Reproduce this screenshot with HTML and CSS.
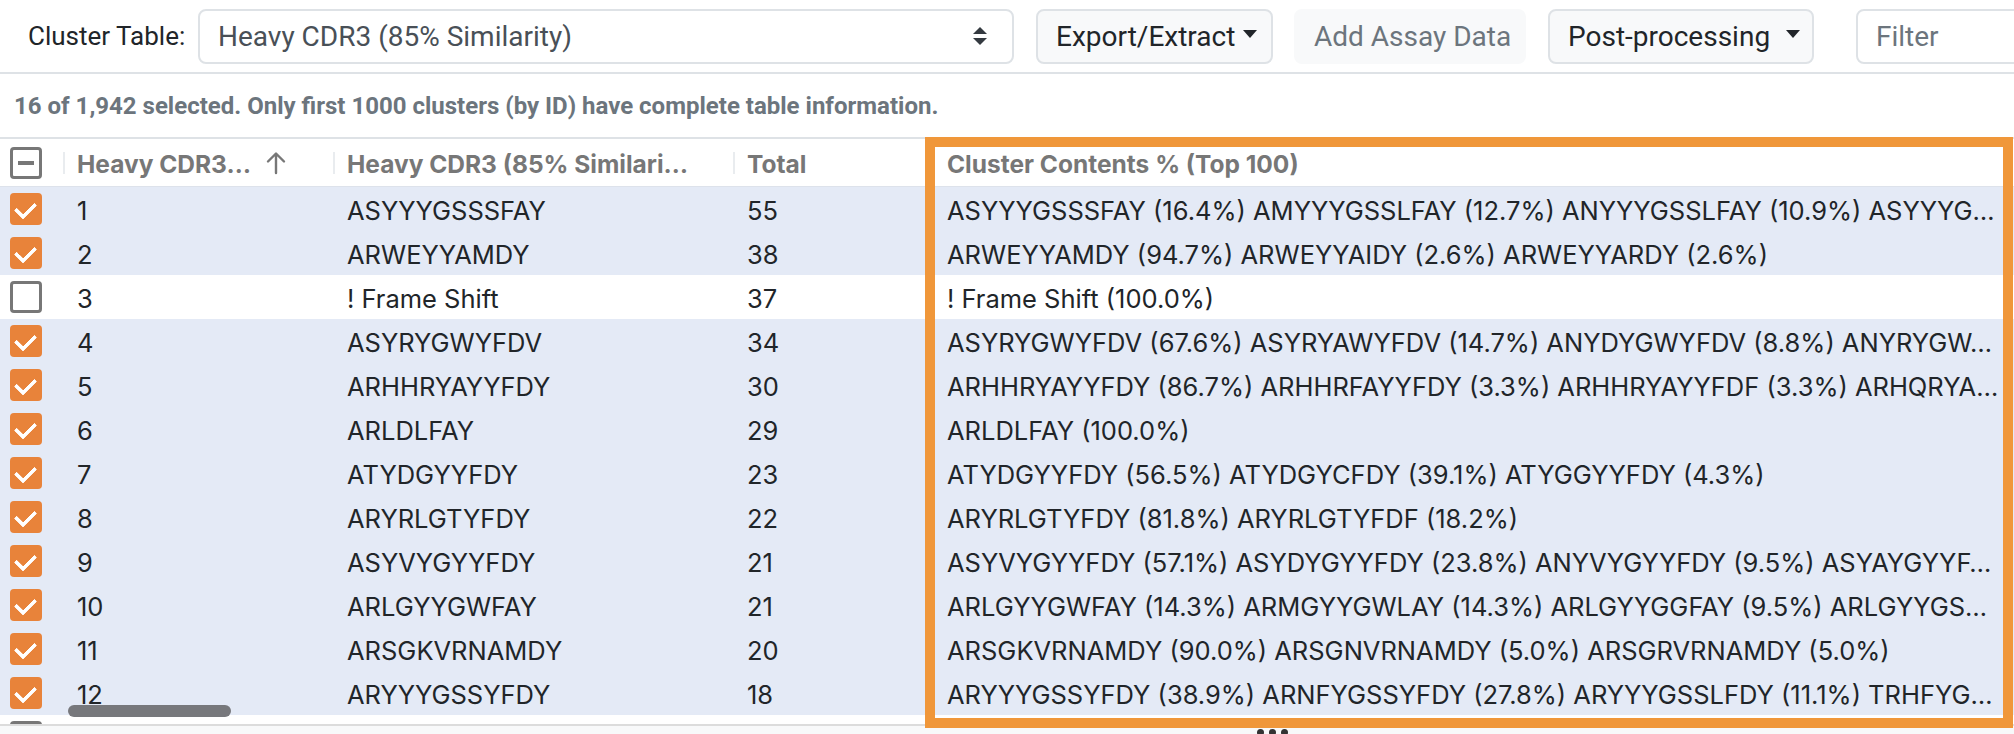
FILE: index.html
```html
<!DOCTYPE html>
<html lang="en">
<head>
<meta charset="utf-8">
<title>Cluster Table</title>
<link rel="stylesheet" href="styles.css">
</head>
<body>
<div class="app">
  <header class="toolbar">
    <label class="tb-label">Cluster Table:</label>
    <div class="select">
      <span class="select-value">Heavy CDR3 (85% Similarity)</span>
      <svg class="select-arrows" viewBox="0 0 16 20" width="16" height="20"><path d="M8 1L15 8H1z" fill="#343a40"/><path d="M8 19L1 12H15z" fill="#343a40"/></svg>
    </div>
    <button class="btn btn-export">Export/Extract<span class="caret"></span></button>
    <button class="btn btn-disabled">Add Assay Data</button>
    <button class="btn btn-post">Post-processing<span class="caret"></span></button>
    <div class="filter">Filter</div>
  </header>

  <div class="info">16 of 1,942 selected. Only first 1000 clusters (by ID) have complete table information.</div>

  <div class="grid">
    <div class="row head">
      <div class="cell cb-cell"><span class="cb cb-indet"></span></div>
      <div class="cell hcell"><span class="divider"></span><span class="htext">Heavy CDR3…</span><svg class="sort" viewBox="0 0 22 24" width="22" height="24"><path d="M11 22V3M3 10.5L11 2.5l8 8" fill="none" stroke="#777" stroke-width="2.4" stroke-linecap="round" stroke-linejoin="round"/></svg></div>
      <div class="cell hcell"><span class="divider"></span><span class="htext">Heavy CDR3 (85% Similari…</span></div>
      <div class="cell hcell"><span class="divider"></span><span class="htext">Total</span></div>
      <div class="cell hcell"><span class="divider"></span><span class="htext">Cluster Contents % (Top 100)</span></div>
    </div>
    <div class="body">
      <div class="row sel"><div class="cell cb-cell"><span class="cb cb-on"></span></div><div class="cell">1</div><div class="cell">ASYYYGSSSFAY</div><div class="cell">55</div><div class="cell">ASYYYGSSSFAY (16.4%) AMYYYGSSLFAY (12.7%) ANYYYGSSLFAY (10.9%) ASYYYG…</div></div>
      <div class="row sel"><div class="cell cb-cell"><span class="cb cb-on"></span></div><div class="cell">2</div><div class="cell">ARWEYYAMDY</div><div class="cell">38</div><div class="cell">ARWEYYAMDY (94.7%) ARWEYYAIDY (2.6%) ARWEYYARDY (2.6%)</div></div>
      <div class="row"><div class="cell cb-cell"><span class="cb"></span></div><div class="cell">3</div><div class="cell">! Frame Shift</div><div class="cell">37</div><div class="cell">! Frame Shift (100.0%)</div></div>
      <div class="row sel"><div class="cell cb-cell"><span class="cb cb-on"></span></div><div class="cell">4</div><div class="cell">ASYRYGWYFDV</div><div class="cell">34</div><div class="cell">ASYRYGWYFDV (67.6%) ASYRYAWYFDV (14.7%) ANYDYGWYFDV (8.8%) ANYRYGW…</div></div>
      <div class="row sel"><div class="cell cb-cell"><span class="cb cb-on"></span></div><div class="cell">5</div><div class="cell">ARHHRYAYYFDY</div><div class="cell">30</div><div class="cell">ARHHRYAYYFDY (86.7%) ARHHRFAYYFDY (3.3%) ARHHRYAYYFDF (3.3%) ARHQRYA…</div></div>
      <div class="row sel"><div class="cell cb-cell"><span class="cb cb-on"></span></div><div class="cell">6</div><div class="cell">ARLDLFAY</div><div class="cell">29</div><div class="cell">ARLDLFAY (100.0%)</div></div>
      <div class="row sel"><div class="cell cb-cell"><span class="cb cb-on"></span></div><div class="cell">7</div><div class="cell">ATYDGYYFDY</div><div class="cell">23</div><div class="cell">ATYDGYYFDY (56.5%) ATYDGYCFDY (39.1%) ATYGGYYFDY (4.3%)</div></div>
      <div class="row sel"><div class="cell cb-cell"><span class="cb cb-on"></span></div><div class="cell">8</div><div class="cell">ARYRLGTYFDY</div><div class="cell">22</div><div class="cell">ARYRLGTYFDY (81.8%) ARYRLGTYFDF (18.2%)</div></div>
      <div class="row sel"><div class="cell cb-cell"><span class="cb cb-on"></span></div><div class="cell">9</div><div class="cell">ASYVYGYYFDY</div><div class="cell">21</div><div class="cell">ASYVYGYYFDY (57.1%) ASYDYGYYFDY (23.8%) ANYVYGYYFDY (9.5%) ASYAYGYYF…</div></div>
      <div class="row sel"><div class="cell cb-cell"><span class="cb cb-on"></span></div><div class="cell">10</div><div class="cell">ARLGYYGWFAY</div><div class="cell">21</div><div class="cell">ARLGYYGWFAY (14.3%) ARMGYYGWLAY (14.3%) ARLGYYGGFAY (9.5%) ARLGYYGS…</div></div>
      <div class="row sel"><div class="cell cb-cell"><span class="cb cb-on"></span></div><div class="cell">11</div><div class="cell">ARSGKVRNAMDY</div><div class="cell">20</div><div class="cell">ARSGKVRNAMDY (90.0%) ARSGNVRNAMDY (5.0%) ARSGRVRNAMDY (5.0%)</div></div>
      <div class="row sel"><div class="cell cb-cell"><span class="cb cb-on"></span></div><div class="cell">12</div><div class="cell">ARYYYGSSYFDY</div><div class="cell">18</div><div class="cell">ARYYYGSSYFDY (38.9%) ARNFYGSSYFDY (27.8%) ARYYYGSSLFDY (11.1%) TRHFYG…</div></div>
      <div class="row"><div class="cell cb-cell"><span class="cb"></span></div><div class="cell"></div><div class="cell"></div><div class="cell"></div><div class="cell"></div></div>
      <div class="hscroll"></div>
    </div>
  </div>

  <footer class="footer"><span class="grip"><i></i><i></i><i></i></span></footer>

  <div class="highlight"></div>
</div>
</body>
</html>
```

FILE: styles.css
```css
* { box-sizing: border-box; }
html, body { margin: 0; padding: 0; background: #fff; }
body { overflow: hidden; width: 2014px; height: 734px; }

.app {
  position: relative;
  width: 2014px;
  height: 734px;
  overflow: hidden;
  font-family: "Inter", "Noto Sans", sans-serif;
  color: #212529;
}

/* Toolbar */
.toolbar {
  display: flex;
  align-items: center;
  height: 74px;
  padding-left: 28px;
  border-bottom: 2px solid #dee2e6;
  font-family: "Roboto", "Liberation Sans", sans-serif;
  font-size: 28px;
  white-space: nowrap;
}
.tb-label {
  font-size: 26px;
  color: #212529;
  width: 170px;
  flex-shrink: 0;
}
.select {
  width: 816px;
  height: 55px;
  flex-shrink: 0;
  display: flex;
  align-items: center;
  justify-content: space-between;
  padding: 0 24px 0 18px;
  border: 2px solid #dee2e6;
  border-radius: 8px;
  background: #fff;
  color: #495057;
}
.select-arrows { display: block; }
.btn {
  height: 55px;
  flex-shrink: 0;
  display: inline-flex;
  align-items: center;
  margin-left: 22px;
  padding: 0 18px;
  font: inherit;
  color: #212529;
  background: #f8f9fa;
  border: 2px solid #dee2e6;
  border-radius: 8px;
}
.btn-export { width: 237px; }
.btn-disabled {
  width: 232px;
  margin-left: 21px;
  color: #6c757d;
  border-color: #f8f9fa;
}
.btn-post { width: 266px; }
.caret {
  display: inline-block;
  margin-left: 8px;
  width: 0;
  height: 0;
  border-top: 8px solid #212529;
  border-left: 7px solid transparent;
  border-right: 7px solid transparent;
  margin-bottom: 4px;
}
.btn-post .caret { margin-left: 16px; }
.filter {
  margin-left: 42px;
  width: 320px;
  height: 55px;
  flex-shrink: 0;
  display: flex;
  align-items: center;
  padding-left: 18px;
  border: 2px solid #dee2e6;
  border-radius: 8px;
  color: #6c757d;
  background: #fff;
}

/* info line */
.info {
  height: 63px;
  display: flex;
  align-items: center;
  padding-left: 14px;
  font-family: "Roboto", "Liberation Sans", sans-serif;
  font-weight: 700;
  font-size: 24px;
  color: #6c757d;
  white-space: nowrap;
}

/* grid */
.grid {
  width: 2200px;
  border-top: 2px solid #dee2e6;
}
.row {
  display: grid;
  grid-template-columns: 63px 270px 400px 200px 1fr;
  align-items: center;
  height: 44px;
  font-size: 25.5px;
  white-space: nowrap;
}
.row.sel { background: #e4eaf6; }
.cell {
  padding: 3px 14px 0;
  overflow: hidden;
  text-overflow: ellipsis;
}
.cb-cell { padding: 0 0 0 10px; display: flex; align-items: center; }

.head {
  height: 48px;
  border-bottom: 1px solid #dde2eb;
  font-weight: 700;
  font-size: 24.5px;
  color: #777;
}
.hcell {
  display: flex;
  align-items: center;
  height: 100%;
  padding: 0 14px 0 0;
}
.divider {
  flex-shrink: 0;
  width: 2px;
  height: 22px;
  background: #e9ecef;
  margin-right: 12px;
}
.htext {
  overflow: hidden;
  text-overflow: ellipsis;
  padding-top: 3px;
}
.sort { margin-left: 14px; flex-shrink: 0; }

.cb {
  display: block;
  width: 32px;
  height: 32px;
  border: 3px solid #777;
  border-radius: 4px;
  background: #fff;
  position: relative;
}
.cb-on {
  border: none;
  background: #e8833a;
}
.cb-on::after {
  content: "";
  position: absolute;
  left: 9px;
  top: 5px;
  width: 9px;
  height: 16px;
  border-right: 4px solid #fff;
  border-bottom: 4px solid #fff;
  transform: rotate(45deg);
  border-radius: 1px;
}
.cb-indet::after {
  content: "";
  position: absolute;
  left: 5px;
  right: 5px;
  top: 11px;
  height: 4px;
  background: #777;
}

.body {
  position: relative;
  height: 537px;
  overflow: hidden;
}
.hscroll {
  position: absolute;
  left: 68px;
  top: 518px;
  width: 163px;
  height: 12px;
  border-radius: 6px;
  background: #77787c;
}

.footer {
  width: 2014px;
  height: 20px;
  border-top: 2px solid #dcdcdc;
  background: #f8f9fa;
  display: flex;
  justify-content: center;
  padding-left: 530px;
}
.grip {
  display: flex;
  gap: 5px;
  padding-top: 3px;
}
.grip i {
  display: block;
  width: 7px;
  height: 7px;
  border-radius: 50%;
  background: #333;
}

/* annotation highlight */
.highlight {
  position: absolute;
  left: 925px;
  top: 137px;
  width: 1088px;
  height: 591px;
  border: 10px solid #f0973a;
  pointer-events: none;
}
```
